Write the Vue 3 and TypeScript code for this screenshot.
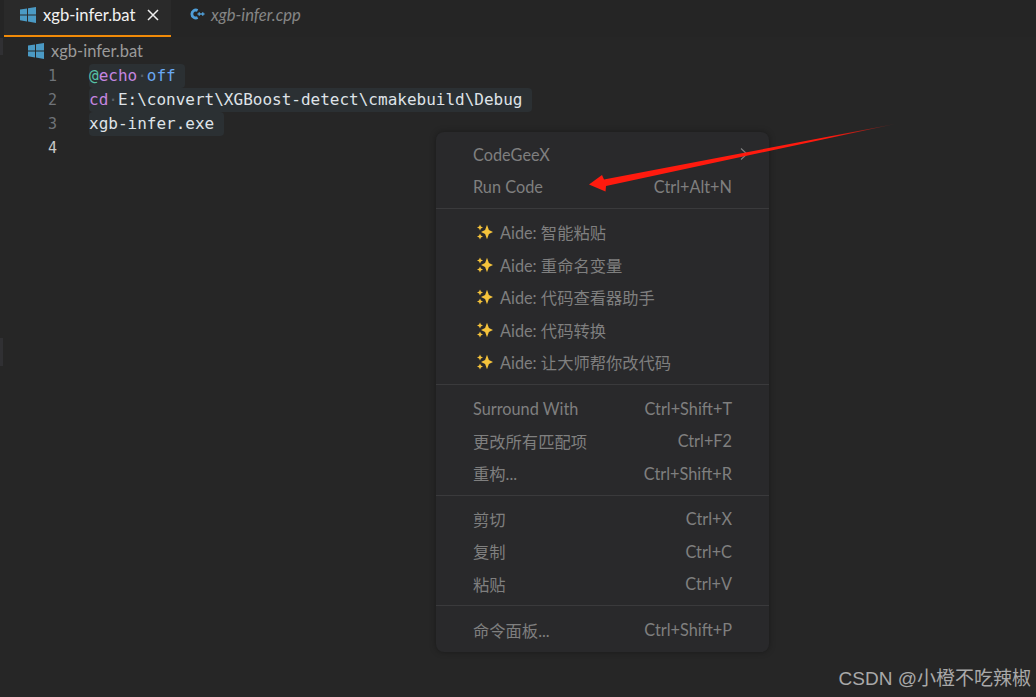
<script setup lang="ts">
interface MenuRow { label: string; keys?: string; arrow?: boolean; spark?: boolean }
const groups: MenuRow[][] = [
  [{ label: 'CodeGeeX', arrow: true }, { label: 'Run Code', keys: 'Ctrl+Alt+N' }],
  [
    { label: 'Aide: 智能粘贴', spark: true },
    { label: 'Aide: 重命名变量', spark: true },
    { label: 'Aide: 代码查看器助手', spark: true },
    { label: 'Aide: 代码转换', spark: true },
    { label: 'Aide: 让大师帮你改代码', spark: true },
  ],
  [
    { label: 'Surround With', keys: 'Ctrl+Shift+T' },
    { label: '更改所有匹配项', keys: 'Ctrl+F2' },
    { label: '重构...', keys: 'Ctrl+Shift+R' },
  ],
  [
    { label: '剪切', keys: 'Ctrl+X' },
    { label: '复制', keys: 'Ctrl+C' },
    { label: '粘贴', keys: 'Ctrl+V' },
  ],
  [{ label: '命令面板...', keys: 'Ctrl+Shift+P' }],
]
</script>

<template>
  <div class="page">
    <header class="tabs">
      <div class="tab active">
        <svg class="win" viewBox="0 0 16 16"><path d="M0 2.6 7 1.5V7.4H0ZM8 1.3 16 0V7.4H8ZM0 8.4H7V14.4L0 13.3ZM8 8.4H16V16L8 14.6Z" /></svg>
        <span>xgb-infer.bat</span>
        <svg class="close" viewBox="0 0 12 12"><path d="M1 1 11 11M11 1 1 11" /></svg>
      </div>
      <div class="tab other">
        <svg class="cpp" viewBox="0 0 15 12">
          <path d="M7.6 2.4A4 4 0 1 0 7.600 9.600" />
          <path class="thin" d="M7.500 6h3.500M9.250 4.300v3.400" />
          <path class="thin" d="M11 6h3.500M12.750 4.300v3.400" />
        </svg>
        <span>xgb-infer.cpp</span>
      </div>
    </header>
    <div class="crumb">
      <svg class="win" viewBox="0 0 16 16"><path d="M0 2.6 7 1.5V7.4H0ZM8 1.3 16 0V7.4H8ZM0 8.4H7V14.4L0 13.3ZM8 8.4H16V16L8 14.6Z" /></svg>
      <span>xgb-infer.bat</span>
    </div>
    <main class="code">
      <div class="line"><span class="num">1</span><span class="src"><span class="at">@</span><span class="kw">echo</span><span class="dot">·</span><span class="fn">off</span></span></div>
      <div class="line"><span class="num">2</span><span class="src"><span class="kw">cd</span><span class="dot">·</span>E:\convert\XGBoost-detect\cmakebuild\Debug</span></div>
      <div class="line"><span class="num">3</span><span class="src">xgb-infer.exe</span></div>
      <div class="line"><span class="num cur">4</span></div>
    </main>

    <i class="gutter-mark a"></i>
    <i class="gutter-mark b"></i>

    <nav class="menu">
      <template v-for="(group, g) in groups" :key="g">
        <div v-if="g > 0" class="sep"></div>
        <div v-for="row in group" :key="row.label" class="row">
          <span class="label"><svg v-if="row.spark" class="spark" viewBox="0 0 16 16">
              <path d="M10 .8 11.900 6.100 16 8 11.900 9.900 10 15.200 8.100 9.900 4 8 8.100 6.100Z" />
              <path d="M3 .6 3.900 2.600 6 3.500 3.900 4.400 3 6.400 2.100 4.400 0 3.500 2.100 2.600Z" />
              <path d="M3 9.600 3.900 11.600 6 12.500 3.900 13.400 3 15.400 2.100 13.400 0 12.500 2.100 11.600Z" />
            </svg><span>{{ row.label }}</span></span>
          <span v-if="row.keys" class="keys">{{ row.keys }}</span>
          <svg v-if="row.arrow" class="chev" viewBox="0 0 8 12"><path d="M1 .5 7 6 1 11.5" /></svg>
        </div>
      </template>
    </nav>

    <svg class="arrow" viewBox="0 0 1036 697">
      <defs>
        <linearGradient id="fade" gradientUnits="userSpaceOnUse" x1="830" y1="137" x2="895" y2="124">
          <stop offset="0" stop-color="#ff1a0e" />
          <stop offset="1" stop-color="#ff1a0e" stop-opacity="0.2" />
        </linearGradient>
      </defs>
      <path d="M589 184.5 602 175 604 179.5 895 124 606 186 605.500 191.500Z" fill="url(#fade)" />
    </svg>

    <div class="mark">CSDN @小橙不吃辣椒</div>
  </div>
</template>

<style>
html, body { margin: 0; background: #262626; }
</style>

<style scoped>
.page {
  position: relative;
  width: 1036px;
  height: 697px;
  overflow: hidden;
  background: #262626;
  font-family: Lato, "Noto Sans CJK SC", sans-serif;
}
.tabs {
  display: flex;
  height: 37px;
  padding-left: 4px;
  box-sizing: border-box;
  background: #252525;
}
.tab {
  display: flex;
  align-items: center;
  box-sizing: border-box;
  height: 37px;
  font-size: 16.6px;
}
.tab.active {
  width: 167px;
  padding-left: 16px;
  padding-bottom: 6px;
  color: #f2f2f2;
  background: #2a2a2a;
  border-bottom: 2px solid #f08a08;
}
.tab.active span { margin-left: 7px; }
.tab.other {
  padding-left: 19px;
  padding-bottom: 8px;
  color: #858585;
  font-style: italic;
}
.tab.other span { margin-left: 6px; }
.win { width: 16px; height: 16px; fill: #4b9ac4; flex: none; }
.close { width: 12px; height: 12px; margin-left: 12px; fill: none; stroke: #eee; stroke-width: 1.5; }
.cpp { width: 15px; height: 12px; margin-top: -2px; fill: none; stroke: #4f9ed8; stroke-width: 2.8; flex: none; }
.cpp .thin { stroke-width: 1.3; }
.crumb {
  display: flex;
  align-items: center;
  height: 27px;
  padding-left: 28px;
  gap: 7px;
  font-size: 16.5px;
  color: #9a9a9a;
}
.code { font-family: "DejaVu Sans Mono", monospace; font-size: 16px; }
.line { display: flex; height: 24px; line-height: 24px; }
.num { width: 57px; text-align: right; color: #6f7378; font-size: 15px; flex: none; }
.num.cur { color: #c8c8c8; }
.src {
  margin-left: 32px;
  padding-right: 9.6px;
  background: #2b3033;
  color: #dfe3e8;
  border-radius: 4px;
  white-space: pre;
}
.at { color: #56c2a6; }
.kw { color: #c586e0; }
.fn { color: #6aa9f4; }
.dot { color: #596068; }
.gutter-mark { position: absolute; left: 0; width: 3px; background: #303033; }
.gutter-mark.a { top: 38px; height: 17px; }
.gutter-mark.b { top: 338px; height: 28px; }
.menu {
  position: absolute;
  left: 436px;
  top: 132px;
  width: 333px;
  height: 520px;
  box-sizing: border-box;
  padding: 6px 0;
  background: #29292b;
  border-radius: 8px;
  box-shadow: 0 0 6px rgba(0, 0, 0, .35);
  color: #7f7f7f;
  font-size: 16.3px;
}
.sep { height: 1px; margin: 5px 0 7.25px; background: #3a3a3c; }
.row {
  display: flex;
  align-items: center;
  justify-content: space-between;
  height: 32.5px;
  box-sizing: border-box;
  padding: 0 37px 0.5px;
}
.label { display: flex; align-items: center; white-space: nowrap; }
.keys { color: #7f7f7f; }
.spark { width: 16px; height: 16px; margin: 0 7px 0 4px; fill: #f5c33b; flex: none; }
.chev { width: 8px; height: 12px; fill: none; stroke: #7f7f7f; stroke-width: 1.1; margin-right: -16px; }
.arrow { position: absolute; inset: 0; width: 1036px; height: 697px; pointer-events: none; }
.mark {
  position: absolute;
  right: 5px;
  top: 667px;
  font-family: "Liberation Sans", "Noto Sans CJK SC", sans-serif;
  font-size: 19px;
  line-height: 24px;
  color: #a9a9a9;
}
</style>
